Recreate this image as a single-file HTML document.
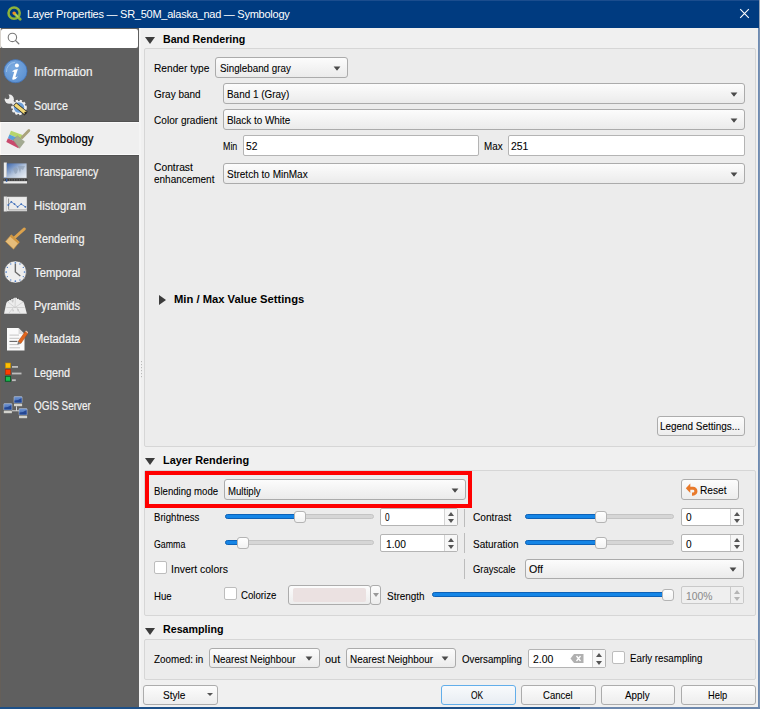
<!DOCTYPE html>
<html><head><meta charset="utf-8">
<style>
*{box-sizing:border-box;margin:0;padding:0}
html,body{width:760px;height:709px;overflow:hidden;background:#f0f0f0;font-family:"Liberation Sans",sans-serif;font-size:11px;color:#000}
.a{position:absolute}
.hdr{font-weight:bold;font-size:11px;white-space:nowrap;letter-spacing:-0.05px}
.grp{border:1px solid #d6d6d6;border-radius:2px;background:#ececec}
.l{white-space:nowrap;letter-spacing:-0.55px;-webkit-text-stroke:0.08px currentColor}
.cb{border:1px solid #ababab;border-radius:3px;background:linear-gradient(#fcfcfc,#ebebeb);white-space:nowrap;letter-spacing:-0.55px;overflow:hidden}
.cb span{position:absolute;left:4px;top:3px}
.arr{position:absolute;width:0;height:0;border-left:3.5px solid transparent;border-right:3.5px solid transparent;border-top:4px solid #474747}
.ed{border:1px solid #b4b4b4;border-radius:2px;background:#fff;white-space:nowrap;letter-spacing:-0.55px}
.ed span{position:absolute;left:4px;top:3px}
.btn{border:1px solid #acacac;border-radius:3px;background:linear-gradient(#fcfcfc,#ededed);white-space:nowrap;letter-spacing:-0.55px;text-align:center}
.chk{width:13px;height:13px;border:1px solid #bdbdbd;background:#fff;border-radius:2px}
.groove{height:5px;border-radius:3px;background:#d6d6d6;border:1px solid #c4c4c4}
.fill{height:5px;border-radius:3px;background:#1585e6;border:1px solid #0d62b8}
.hdl{width:12px;height:12px;border:1px solid #b4b4b4;border-radius:3px;background:linear-gradient(#fff,#f2f2f2)}
.spin{border:1px solid #b4b4b4;border-radius:2px;background:#fff;white-space:nowrap;letter-spacing:-0.55px}
.spin span{position:absolute;left:4px;top:2.5px}
.spin .sb{position:absolute;right:0;top:0;bottom:0;width:13px;border-left:1px solid #d4d4d4;background:#f7f7f7}
.up{position:absolute;left:2.5px;width:0;height:0;border-left:3.5px solid transparent;border-right:3.5px solid transparent;border-bottom:4px solid #555}
.dn{position:absolute;left:2.5px;width:0;height:0;border-left:3.5px solid transparent;border-right:3.5px solid transparent;border-top:4px solid #555}
.vsep{width:1px;background:#bcbcbc}
.side{white-space:nowrap;font-size:12px;letter-spacing:-0.15px;-webkit-text-stroke:0.2px currentColor}
</style></head><body>
<div class="a" style="left:0;top:0;width:760px;height:28px;background:#003b80"></div>
<div class="a" style="left:0;top:0;width:760px;height:1px;background:#1b4d8e"></div>
<svg class="a" style="left:6px;top:5px" width="18" height="18" viewBox="0 0 18 18">
<circle cx="8.1" cy="8.1" r="5.6" fill="none" stroke="#8db33a" stroke-width="2.5"/>
<path d="M8.4 8.4 L14.2 14.2" stroke="#8db33a" stroke-width="2.8" stroke-linecap="round"/>
<path d="M8.8 8.8 L12 12" stroke="#b3d36a" stroke-width="1.4" stroke-linecap="round"/>
<circle cx="8.1" cy="8.1" r="1.7" fill="#f39020"/></svg>
<div class="a" style="left:27px;top:8px;color:#fff;font-size:11px;letter-spacing:-0.25px;white-space:nowrap">Layer Properties — SR_50M_alaska_nad — Symbology</div>
<svg class="a" style="left:739px;top:8px" width="12" height="12" viewBox="0 0 12 12"><path d="M1.2 1.2L9.8 9.8M9.8 1.2L1.2 9.8" stroke="#fff" stroke-width="1.1"/></svg>
<div class="a" style="left:759px;top:0;width:1px;height:28px;background:#9aa6b8"></div>
<div class="a" style="left:758px;top:28px;width:1px;height:681px;background:#6d8bb3"></div>
<div class="a" style="left:759px;top:28px;width:1px;height:681px;background:#7d93b2"></div>
<div class="a" style="left:0;top:707px;width:580px;height:2px;background:#1d5088"></div>
<div class="a" style="left:580px;top:707px;width:180px;height:2px;background:#6d88ad"></div>
<svg class="a" style="left:145px;top:37px" width="10" height="7" viewBox="0 0 10 7"><path d="M0 0H10L5.0 7Z" fill="#3c3c3c"/></svg>
<div class="a grp" style="left:144px;top:48px;width:612px;height:399px"></div>
<div class="a cb" style="left:215px;top:57px;width:133px;height:21px;"><svg class="a" style="left:117px;top:7.8px" width="8" height="5" viewBox="0 0 8 5"><path d="M0.6 0.6 H7.4 L4.4 4.2 Q4 4.6 3.6 4.2 Z" fill="#4a4a4a"/></svg></div>
<div class="a cb" style="left:223px;top:83px;width:522px;height:21px;"><svg class="a" style="left:506px;top:7.8px" width="8" height="5" viewBox="0 0 8 5"><path d="M0.6 0.6 H7.4 L4.4 4.2 Q4 4.6 3.6 4.2 Z" fill="#4a4a4a"/></svg></div>
<div class="a cb" style="left:223px;top:109px;width:522px;height:21px;"><svg class="a" style="left:506px;top:7.8px" width="8" height="5" viewBox="0 0 8 5"><path d="M0.6 0.6 H7.4 L4.4 4.2 Q4 4.6 3.6 4.2 Z" fill="#4a4a4a"/></svg></div>
<div class="a ed" style="left:243px;top:135px;width:236px;height:21px;"></div>
<div class="a ed" style="left:508px;top:135px;width:237px;height:21px;"></div>
<div class="a cb" style="left:223px;top:163px;width:522px;height:21px;"><svg class="a" style="left:506px;top:7.8px" width="8" height="5" viewBox="0 0 8 5"><path d="M0.6 0.6 H7.4 L4.4 4.2 Q4 4.6 3.6 4.2 Z" fill="#4a4a4a"/></svg></div>
<svg class="a" style="left:158.6px;top:295px" width="7" height="10" viewBox="0 0 7 10"><path d="M0 0V10L7 5.0Z" fill="#3c3c3c"/></svg>
<div class="a btn" style="left:657px;top:416px;width:88px;height:20px;"></div>
<svg class="a" style="left:145px;top:458px" width="10" height="7" viewBox="0 0 10 7"><path d="M0 0H10L5.0 7Z" fill="#3c3c3c"/></svg>
<div class="a grp" style="left:144px;top:470px;width:612px;height:146px"></div>
<div class="a" style="left:145px;top:471px;width:327px;height:37px;border:4px solid #f00"></div>
<div class="a cb" style="left:224px;top:479px;width:242px;height:21px;"><svg class="a" style="left:226px;top:7.8px" width="8" height="5" viewBox="0 0 8 5"><path d="M0.6 0.6 H7.4 L4.4 4.2 Q4 4.6 3.6 4.2 Z" fill="#4a4a4a"/></svg></div>
<div class="a btn" style="left:681px;top:479px;width:58px;height:21px;"></div>
<svg class="a" style="left:685px;top:482px" width="14" height="14" viewBox="0 0 14 14"><path d="M4.5 6.3 H8 A2.9 2.9 0 0 1 8 12.1 H7" stroke="#e8792a" stroke-width="3.1" fill="none"/><path d="M0.8 6.3 L5.3 1.6 L5.3 11 Z" fill="#e8792a"/></svg>
<div class="a groove" style="left:225px;top:514px;width:149px"></div>
<div class="a fill" style="left:225px;top:514px;width:75px"></div>
<div class="a hdl" style="left:294px;top:510.5px"></div>
<div class="a spin" style="left:380px;top:508px;width:78px;height:18px;"><div class="sb"><div class="up" style="top:2.5px;"></div><div class="dn" style="top:9.5px;"></div></div></div>
<div class="a vsep" style="left:464px;top:509px;height:18px"></div>
<div class="a groove" style="left:525px;top:514px;width:149px"></div>
<div class="a fill" style="left:525px;top:514px;width:76px"></div>
<div class="a hdl" style="left:595px;top:510.5px"></div>
<div class="a spin" style="left:681px;top:508px;width:63px;height:18px;"><div class="sb"><div class="up" style="top:2.5px;"></div><div class="dn" style="top:9.5px;"></div></div></div>
<div class="a groove" style="left:225px;top:540px;width:149px"></div>
<div class="a fill" style="left:225px;top:540px;width:18px"></div>
<div class="a hdl" style="left:237px;top:536.5px"></div>
<div class="a spin" style="left:380px;top:534px;width:78px;height:18px;"><div class="sb"><div class="up" style="top:2.5px;"></div><div class="dn" style="top:9.5px;"></div></div></div>
<div class="a vsep" style="left:464px;top:533px;height:20px"></div>
<div class="a groove" style="left:525px;top:540px;width:149px"></div>
<div class="a fill" style="left:525px;top:540px;width:76px"></div>
<div class="a hdl" style="left:595px;top:536.5px"></div>
<div class="a spin" style="left:681px;top:534px;width:63px;height:18px;"><div class="sb"><div class="up" style="top:2.5px;"></div><div class="dn" style="top:9.5px;"></div></div></div>
<div class="a chk" style="left:154px;top:561px"></div>
<div class="a vsep" style="left:464px;top:559px;height:20px"></div>
<div class="a cb" style="left:525px;top:559px;width:219px;height:20px;"><svg class="a" style="left:203px;top:7.3px" width="8" height="5" viewBox="0 0 8 5"><path d="M0.6 0.6 H7.4 L4.4 4.2 Q4 4.6 3.6 4.2 Z" fill="#4a4a4a"/></svg></div>
<div class="a chk" style="left:224px;top:587px"></div>
<div class="a btn" style="left:288px;top:585px;width:83px;height:20px"><div class="a" style="left:4px;top:2px;width:73px;height:14px;background:#ebe1e1;border-radius:2px"></div></div>
<div class="a btn" style="left:370px;top:585px;width:11px;height:20px"><div class="arr" style="left:1.5px;top:7px;border-top-color:#999"></div></div>
<div class="a groove" style="left:432px;top:592px;width:242px"></div>
<div class="a fill" style="left:432px;top:592px;width:236px"></div>
<div class="a hdl" style="left:662px;top:588.5px"></div>
<div class="a spin" style="left:681px;top:586px;width:63px;height:18px;background:#efefef;border-color:#c9c9c9"><div class="sb" style="background:#efefef;border-left-color:#c9c9c9"><div class="up" style="top:2.5px;border-bottom-color:#b4b4b4"></div><div class="dn" style="top:9.5px;border-top-color:#b4b4b4"></div></div></div>
<svg class="a" style="left:145px;top:627.5px" width="10" height="7" viewBox="0 0 10 7"><path d="M0 0H10L5.0 7Z" fill="#3c3c3c"/></svg>
<div class="a grp" style="left:144px;top:639px;width:612px;height:41px"></div>
<div class="a cb" style="left:209px;top:648px;width:111px;height:20px;"><svg class="a" style="left:95px;top:7.3px" width="8" height="5" viewBox="0 0 8 5"><path d="M0.6 0.6 H7.4 L4.4 4.2 Q4 4.6 3.6 4.2 Z" fill="#4a4a4a"/></svg></div>
<div class="a cb" style="left:346px;top:648px;width:110px;height:20px;"><svg class="a" style="left:94px;top:7.3px" width="8" height="5" viewBox="0 0 8 5"><path d="M0.6 0.6 H7.4 L4.4 4.2 Q4 4.6 3.6 4.2 Z" fill="#4a4a4a"/></svg></div>
<div class="a spin" style="left:528px;top:649px;width:78px;height:19px;"><div class="sb"><div class="up" style="top:2.5px;"></div><div class="dn" style="top:10.5px;"></div></div></div>
<svg class="a" style="left:570px;top:653px" width="14" height="11" viewBox="0 0 14 11"><path d="M0.5 5.5 L4 1 H13.5 V10 H4 Z" fill="#b0b0b0"/><path d="M6.5 3 L10.5 8 M10.5 3 L6.5 8" stroke="#fff" stroke-width="1.3"/></svg>
<div class="a chk" style="left:612px;top:651px"></div>
<div class="a btn" style="left:143px;top:685px;width:75px;height:20px;"></div>
<div class="arr" style="left:207px;top:693px;border-left-width:3px;border-right-width:3px;border-top-width:3px;border-top-color:#555"></div>
<div class="a btn" style="left:441px;top:685px;width:75px;height:20px;border-color:#62aeea;background:linear-gradient(#f8fafc,#e8edf3)"></div>
<div class="a btn" style="left:521px;top:685px;width:75px;height:20px;"></div>
<div class="a btn" style="left:601px;top:685px;width:74px;height:20px;"></div>
<div class="a btn" style="left:681px;top:685px;width:75px;height:20px;"></div>
<div class="a l" style="left:153.75px;top:62.00px;transform:scaleX(0.9250);transform-origin:0 0;letter-spacing:0;">Render type</div>
<div class="a l" style="left:220.00px;top:62.00px;transform:scaleX(0.8906);transform-origin:0 0;letter-spacing:0;">Singleband gray</div>
<div class="a l" style="left:153.75px;top:88.00px;transform:scaleX(0.9069);transform-origin:0 0;letter-spacing:0;">Gray band</div>
<div class="a l" style="left:227.00px;top:88.00px;transform:scaleX(0.9022);transform-origin:0 0;letter-spacing:0;">Band 1 (Gray)</div>
<div class="a l" style="left:153.75px;top:114.25px;transform:scaleX(0.9167);transform-origin:0 0;letter-spacing:0;">Color gradient</div>
<div class="a l" style="left:227.00px;top:114.25px;transform:scaleX(0.9000);transform-origin:0 0;letter-spacing:0;">Black to White</div>
<div class="a l" style="left:222.50px;top:140.00px;transform:scaleX(0.8056);transform-origin:0 0;letter-spacing:0;">Min</div>
<div class="a l" style="left:246.25px;top:140.00px;transform:scaleX(0.9375);transform-origin:0 0;letter-spacing:0;">52</div>
<div class="a l" style="left:484.25px;top:140.00px;transform:scaleX(0.8929);transform-origin:0 0;letter-spacing:0;">Max</div>
<div class="a l" style="left:511.25px;top:140.00px;transform:scaleX(0.9444);transform-origin:0 0;letter-spacing:0;">251</div>
<div class="a l" style="left:153.75px;top:161.25px;transform:scaleX(0.9345);transform-origin:0 0;letter-spacing:0;">Contrast</div>
<div class="a l" style="left:153.75px;top:173.25px;transform:scaleX(0.9067);transform-origin:0 0;letter-spacing:0;">enhancement</div>
<div class="a l" style="left:227.00px;top:168.00px;transform:scaleX(0.9101);transform-origin:0 0;letter-spacing:0;">Stretch to MinMax</div>
<div class="a l" style="left:660.30px;top:420.40px;transform:scaleX(0.9011);transform-origin:0 0;letter-spacing:0;">Legend Settings...</div>
<div class="a l" style="left:153.75px;top:484.50px;transform:scaleX(0.8733);transform-origin:0 0;letter-spacing:0;">Blending mode</div>
<div class="a l" style="left:228.00px;top:484.50px;transform:scaleX(0.8750);transform-origin:0 0;letter-spacing:0;">Multiply</div>
<div class="a l" style="left:700.00px;top:483.75px;transform:scaleX(0.9224);transform-origin:0 0;letter-spacing:0;">Reset</div>
<div class="a l" style="left:153.75px;top:511.25px;transform:scaleX(0.8726);transform-origin:0 0;letter-spacing:0;">Brightness</div>
<div class="a l" style="left:385.00px;top:511.25px;transform:scaleX(0.7500);transform-origin:0 0;letter-spacing:0;">0</div>
<div class="a l" style="left:472.50px;top:511.25px;transform:scaleX(0.9226);transform-origin:0 0;letter-spacing:0;">Contrast</div>
<div class="a l" style="left:685.50px;top:511.25px;transform:scaleX(0.9167);transform-origin:0 0;letter-spacing:0;">0</div>
<div class="a l" style="left:153.75px;top:537.50px;transform:scaleX(0.8000);transform-origin:0 0;letter-spacing:0;">Gamma</div>
<div class="a l" style="left:385.50px;top:537.50px;transform:scaleX(0.9286);transform-origin:0 0;letter-spacing:0;">1.00</div>
<div class="a l" style="left:472.50px;top:537.50px;transform:scaleX(0.9100);transform-origin:0 0;letter-spacing:0;">Saturation</div>
<div class="a l" style="left:685.50px;top:537.50px;transform:scaleX(0.9167);transform-origin:0 0;letter-spacing:0;">0</div>
<div class="a l" style="left:171.25px;top:562.50px;transform:scaleX(0.9500);transform-origin:0 0;letter-spacing:0;">Invert colors</div>
<div class="a l" style="left:472.50px;top:563.00px;transform:scaleX(0.8600);transform-origin:0 0;letter-spacing:0;">Grayscale</div>
<div class="a l" style="left:529.25px;top:563.00px;transform:scaleX(0.9667);transform-origin:0 0;letter-spacing:0;">Off</div>
<div class="a l" style="left:153.75px;top:589.50px;transform:scaleX(0.8750);transform-origin:0 0;letter-spacing:0;">Hue</div>
<div class="a l" style="left:241.25px;top:588.75px;transform:scaleX(0.8750);transform-origin:0 0;letter-spacing:0;">Colorize</div>
<div class="a l" style="left:387.00px;top:589.50px;transform:scaleX(0.9048);transform-origin:0 0;letter-spacing:0;">Strength</div>
<div class="a l" style="left:153.75px;top:652.50px;transform:scaleX(0.8955);transform-origin:0 0;letter-spacing:0;">Zoomed: in</div>
<div class="a l" style="left:213.25px;top:652.50px;transform:scaleX(0.8925);transform-origin:0 0;letter-spacing:0;">Nearest Neighbour</div>
<div class="a l" style="left:325.00px;top:653.00px;transform:scaleX(1.0000);transform-origin:0 0;letter-spacing:0;">out</div>
<div class="a l" style="left:350.00px;top:652.50px;transform:scaleX(0.9005);transform-origin:0 0;letter-spacing:0;">Nearest Neighbour</div>
<div class="a l" style="left:462.00px;top:652.50px;transform:scaleX(0.8824);transform-origin:0 0;letter-spacing:0;">Oversampling</div>
<div class="a l" style="left:533.00px;top:652.50px;transform:scaleX(0.9524);transform-origin:0 0;letter-spacing:0;">2.00</div>
<div class="a l" style="left:629.50px;top:651.75px;transform:scaleX(0.8841);transform-origin:0 0;letter-spacing:0;">Early resampling</div>
<div class="a l" style="left:163.00px;top:688.75px;transform:scaleX(0.9167);transform-origin:0 0;letter-spacing:0;">Style</div>
<div class="a l" style="left:471.25px;top:688.75px;transform:scaleX(0.7647);transform-origin:0 0;letter-spacing:0;">OK</div>
<div class="a l" style="left:543.00px;top:688.75px;transform:scaleX(0.8676);transform-origin:0 0;letter-spacing:0;">Cancel</div>
<div class="a l" style="left:625.00px;top:688.75px;transform:scaleX(0.8929);transform-origin:0 0;letter-spacing:0;">Apply</div>
<div class="a l" style="left:707.50px;top:688.75px;transform:scaleX(0.8478);transform-origin:0 0;letter-spacing:0;">Help</div>
<div class="a hdr" style="left:162.70px;top:32.70px;transform:scaleX(0.9682);transform-origin:0 0;letter-spacing:0;">Band Rendering</div>
<div class="a hdr" style="left:173.70px;top:292.80px;transform:scaleX(1.0195);transform-origin:0 0;letter-spacing:0;">Min / Max Value Settings</div>
<div class="a hdr" style="left:162.50px;top:453.75px;transform:scaleX(0.9914);transform-origin:0 0;letter-spacing:0;">Layer Rendering</div>
<div class="a hdr" style="left:163.00px;top:623.00px;transform:scaleX(0.9718);transform-origin:0 0;letter-spacing:0;">Resampling</div>
<div class="a l" style="left:686.25px;top:589.50px;transform:scaleX(0.9375);transform-origin:0 0;letter-spacing:0;color:#8c8c8c;">100%</div>
<div class="a" style="left:0;top:28px;width:139px;height:679px;background:#5f5f5f"></div>
<div class="a" style="left:1px;top:29px;width:137px;height:19px;background:#fff;border-radius:2px"></div>
<svg class="a" style="left:6px;top:31px" width="16" height="16" viewBox="0 0 16 16"><circle cx="6.4" cy="6.4" r="4.2" fill="none" stroke="#7a7a7a" stroke-width="1.1"/><path d="M9.4 9.4 L12.8 12.8" stroke="#7a7a7a" stroke-width="1.3" stroke-linecap="round"/></svg>
<div class="a" style="left:0;top:121px;width:139px;height:35px;background:#525252"></div>
<div class="a" style="left:0;top:122px;width:139px;height:33px;background:#efefef;border-top:1px solid #fafafa;border-bottom:1px solid #fafafa"></div>
<div class="a" style="left:0;top:48px;width:1px;height:659px;background:#655f59"></div>
<div class="a" style="left:0;top:28px;width:1px;height:20px;background:#d9d4ce"></div>
<div class="a" style="left:0;top:122px;width:1px;height:33px;background:#fcf8f5"></div>
<div class="a" style="left:139px;top:28px;width:2px;height:679px;background:#f4f4f4"></div>
<svg class="a" style="left:140px;top:360px" width="3" height="18" viewBox="0 0 3 18"><g fill="#b9b9b9"><rect x="1" y="1" width="1" height="1.2"/><rect x="1" y="4" width="1" height="1.2"/><rect x="1" y="7" width="1" height="1.2"/><rect x="1" y="10" width="1" height="1.2"/><rect x="1" y="13" width="1" height="1.2"/><rect x="1" y="16" width="1" height="1.2"/></g></svg>
<svg class="a" style="left:3px;top:59px" width="25" height="25" viewBox="0 0 25 25"><defs><radialGradient id="gi" cx="0.4" cy="0.35" r="0.75"><stop offset="0" stop-color="#7aaae0"/><stop offset="1" stop-color="#5a8fd0"/></radialGradient></defs><circle cx="12.5" cy="12.2" r="11.6" fill="url(#gi)" stroke="#3d6db0" stroke-width="0.7"/><path d="M3.5 13 A9 9 0 0 1 12 3.3" stroke="#a8c8ee" stroke-width="1" fill="none" opacity="0.8"/><circle cx="13.9" cy="6.4" r="2" fill="#fff"/><path d="M8.8 12.6 Q11 10.4 14.9 10 L12.5 17.6 Q12.3 18.7 13.6 18 L15 17.3 Q13.2 20.6 10.3 20.7 Q8.9 20.7 9.3 19.2 L11.2 13 Q10.6 12.5 8.8 12.6 Z" fill="#fff"/></svg>
<div class="a side" style="left:33.80px;top:65.2px;color:#f2f2f2;letter-spacing:0;transform:scaleX(0.9767);transform-origin:0 0">Information</div>
<svg class="a" style="left:3px;top:91.5px" width="25" height="25" viewBox="0 0 25 25"><circle cx="16" cy="15.5" r="6.6" fill="#f0f0f0" stroke="#f0f0f0" stroke-width="2.4" stroke-dasharray="2.2 1.75"/><circle cx="16" cy="15.5" r="5.2" fill="#6d9fd8"/><path d="M6.5 7.5 L13 13.5" stroke="#e2e2e2" stroke-width="3.2" stroke-linecap="round"/><circle cx="6.3" cy="7.2" r="4.6" fill="#ececec"/><circle cx="4.2" cy="5.0" r="2.3" fill="#5f5f5f"/><path d="M1 3.5 L4 6 L6 3 L3 0 Z" fill="#5f5f5f"/><path d="M11.6 12 L23.2 21.6" stroke="#2a2a2a" stroke-width="4.8" stroke-linecap="butt"/><path d="M12.1 12.4 L22.6 21.1" stroke="#f2d873" stroke-width="3.3" stroke-linecap="butt"/><circle cx="22.4" cy="20.9" r="1.1" fill="#222"/></svg>
<div class="a side" style="left:33.80px;top:98.6px;color:#f2f2f2;letter-spacing:0;transform:scaleX(0.8921);transform-origin:0 0">Source</div>
<svg class="a" style="left:6px;top:125.5px" width="25" height="25" viewBox="0 0 25 25"><path d="M5 4.7 L16.6 8.9 L15.2 13.4 L3.4 8.5 Z" fill="#b6d56c"/><path d="M3.4 8.5 L15.2 13.4 L13.8 17.8 L1.9 12.2 Z" fill="#5aa0dc"/><path d="M1.9 12.2 L13.8 17.8 L12.4 22.3 L0.3 16 Z" fill="#c84a6c"/><path d="M16.1 11.4 L22.9 4.4" stroke="#aaa37c" stroke-width="2.8" stroke-linecap="round"/><path d="M7.2 13.9 L11.4 9.9 L18.5 15.7 L13.5 22.3 Z" fill="#a3aa92" stroke="#8f9578" stroke-width="0.5"/></svg>
<div class="a side" style="left:36.80px;top:132.0px;color:#000;letter-spacing:0;transform:scaleX(0.9525);transform-origin:0 0">Symbology</div>
<svg class="a" style="left:3px;top:161px" width="25" height="25" viewBox="0 0 25 25"><defs><linearGradient id="gt" x1="0" y1="0" x2="1" y2="1"><stop offset="0" stop-color="#3b66ad"/><stop offset="0.55" stop-color="#b9c8dd"/><stop offset="1" stop-color="#eef2f7"/></linearGradient></defs><rect x="0.8" y="1.5" width="3" height="15" fill="#ececec"/><rect x="3.8" y="2.4" width="19.8" height="14.5" fill="url(#gt)"/><path d="M10 8 L13 6 L15 8 L14 12 L12 13 Z M15 5 L22 5 L20 9 L18 8 L17 12 L16 9 Z M6 9 L8 10 L7 13 Z" fill="#8f9fb6" opacity="0.7"/><rect x="0.8" y="16" width="3" height="1" fill="#9fb3d4"/><rect x="0.5" y="18" width="24" height="1.8" fill="#3c3c3c"/><path d="M1.5 18 V19.8 M4 18 V19.8 M6.5 18 V19.8 M9 18 V19.8 M11.5 18 V19.8 M14 18 V19.8 M16.5 18 V19.8 M19 18 V19.8 M21.5 18 V19.8" stroke="#777" stroke-width="0.6"/><rect x="0.5" y="20.2" width="23.5" height="2.3" fill="#eaeaea"/><rect x="2.9" y="17.8" width="1.4" height="3" fill="#2d5aa6"/></svg>
<div class="a side" style="left:33.80px;top:165.4px;color:#f2f2f2;letter-spacing:0;transform:scaleX(0.8808);transform-origin:0 0">Transparency</div>
<svg class="a" style="left:3px;top:194.5px" width="25" height="25" viewBox="0 0 25 25"><rect x="0.8" y="1.5" width="3" height="15" fill="#e6e6e6"/><rect x="3.8" y="2" width="20" height="14" fill="#ececec" stroke="#d8d8d8" stroke-width="0.5"/><path d="M5.6 3.5 V14.5 H23.5" stroke="#777" stroke-width="0.8" fill="none"/><rect x="5.6" y="14.2" width="18" height="1.8" fill="#cfcfcf"/><path d="M5.3 10 L8.3 6.8 L11.5 9.1 L14.6 11.8 L18.2 9.1 L22.3 11.8" stroke="#4a78c0" stroke-width="0.8" fill="none"/><g fill="#3d6cb8"><circle cx="5.3" cy="10" r="0.9"/><circle cx="8.3" cy="6.8" r="0.9"/><circle cx="11.5" cy="9.1" r="0.9"/><circle cx="14.6" cy="11.8" r="0.9"/><circle cx="18.2" cy="9.1" r="0.9"/><circle cx="22.3" cy="11.8" r="0.9"/></g></svg>
<div class="a side" style="left:33.80px;top:198.8px;color:#f2f2f2;letter-spacing:0;transform:scaleX(0.9491);transform-origin:0 0">Histogram</div>
<svg class="a" style="left:3px;top:225px" width="25" height="25" viewBox="0 0 25 25"><path d="M21.4 3.9 L11.8 12.5" stroke="#dca24c" stroke-width="2.8" stroke-linecap="round"/><path d="M2.4 16.5 L8.3 9.8 L16.4 17 L10.6 24.2 Z" fill="#e6bd7a" stroke="#c08a3a" stroke-width="0.6"/><path d="M8.3 9.8 L16.4 17 L15 18.6 L6.9 11.4 Z" fill="#d09640"/></svg>
<div class="a side" style="left:33.80px;top:232.2px;color:#f2f2f2;letter-spacing:0;transform:scaleX(0.9127);transform-origin:0 0">Rendering</div>
<svg class="a" style="left:3px;top:260px" width="25" height="25" viewBox="0 0 25 25"><circle cx="12.35" cy="12.0" r="11.1" fill="#eeeeee" stroke="#505050" stroke-width="0.6"/><g fill="#4f7fc8"><circle cx="12.35" cy="2.80" r="0.85"/><circle cx="16.95" cy="4.03" r="0.7"/><circle cx="20.32" cy="7.40" r="0.7"/><circle cx="21.55" cy="12.00" r="0.85"/><circle cx="20.32" cy="16.60" r="0.7"/><circle cx="16.95" cy="19.97" r="0.7"/><circle cx="12.35" cy="21.20" r="0.85"/><circle cx="7.75" cy="19.97" r="0.7"/><circle cx="4.38" cy="16.60" r="0.7"/><circle cx="3.15" cy="12.00" r="0.85"/><circle cx="4.38" cy="7.40" r="0.7"/><circle cx="7.75" cy="4.03" r="0.7"/></g><path d="M12.35 3.8 V12.0 L17.3 16" stroke="#6a6a6a" stroke-width="1.4" fill="none"/></svg>
<div class="a side" style="left:33.80px;top:265.6px;color:#f2f2f2;letter-spacing:0;transform:scaleX(0.9388);transform-origin:0 0">Temporal</div>
<svg class="a" style="left:3px;top:295px" width="25" height="25" viewBox="0 0 25 25"><path d="M1 18.7 L3.3 8 L4.6 6 L12.4 2.3 L19.9 6 L21 8 L23.9 18.7 Z" fill="#ededed"/><path d="M4.6 6 L12.4 2.3 L19.9 6" stroke="#2e2e2e" stroke-width="0.8" stroke-dasharray="1.2 1.4" fill="none"/><path d="M5 7 L12 12.5 L20 7 M12.4 3 L12 12.5 M3.5 12.5 H21.5 M6 18 L10 13 M17 18 L14 13" stroke="#c2c2c2" stroke-width="0.6" fill="none"/><path d="M9 14 L11 15 L10 17 Z M14 14 L16 14.5 L15 17 Z M8 5.5 L11 4.5 L10 8 Z" fill="#b8b8b8" opacity="0.7"/></svg>
<div class="a side" style="left:33.80px;top:299.0px;color:#f2f2f2;letter-spacing:0;transform:scaleX(0.9200);transform-origin:0 0">Pyramids</div>
<svg class="a" style="left:3px;top:326px" width="25" height="25" viewBox="0 0 25 25"><path d="M4 2 L15.5 2 L21.5 8 L21.5 24.5 L4 24.5 Z" fill="#fafafa"/><path d="M15.5 2 L15.5 8 L21.5 8 Z" fill="#dcdcdc"/><path d="M6.5 9.1 H16 M6.5 12.3 H16.5 M6.5 15.4 H16.5 M6.5 18.6 H16.5 M6.5 21.8 H17" stroke="#bdbdbd" stroke-width="0.9"/><path d="M6.5 15.4 H14" stroke="#555" stroke-width="0.9"/><path d="M15.2 15.6 L22.2 5.6 L24.8 7.5 L17.8 17.5 Z" fill="#e2661e" stroke="#a84810" stroke-width="0.5"/><path d="M22.2 5.6 L23 4.5 L25.6 6.4 L24.8 7.5 Z" fill="#f0c0a0"/><path d="M15.2 15.6 L17.8 17.5 L14.2 18.6 Z" fill="#777"/></svg>
<div class="a side" style="left:33.80px;top:332.4px;color:#f2f2f2;letter-spacing:0;transform:scaleX(0.9300);transform-origin:0 0">Metadata</div>
<svg class="a" style="left:3px;top:358.5px" width="25" height="25" viewBox="0 0 25 25"><rect x="2.4" y="4" width="5.2" height="5" fill="#ffc000" stroke="#c08a00" stroke-width="0.6"/><rect x="2.4" y="10.6" width="5.2" height="5" fill="#ff3d00" stroke="#b02a00" stroke-width="0.6"/><rect x="2.4" y="17.3" width="5.2" height="5" fill="#16c050" stroke="#0a5a26" stroke-width="1" stroke-width="0.6"/><rect x="9" y="7" width="6" height="1.8" fill="#bdbdbd"/><rect x="9" y="13.6" width="9.5" height="1.8" fill="#bdbdbd"/><rect x="9" y="20.3" width="3.8" height="1.8" fill="#bdbdbd"/></svg>
<div class="a side" style="left:33.80px;top:365.8px;color:#f2f2f2;letter-spacing:0;transform:scaleX(0.9025);transform-origin:0 0">Legend</div>
<svg class="a" style="left:3px;top:393.5px" width="25" height="25" viewBox="0 0 25 25"><defs><linearGradient id="gs" x1="0" y1="0" x2="0" y2="1"><stop offset="0" stop-color="#7196d2"/><stop offset="1" stop-color="#3a64b0"/></linearGradient></defs><path d="M13.5 12.3 V16.8 M9 16.8 H16" stroke="#d8d8d8" stroke-width="1"/><rect x="11" y="2.6" width="8.1" height="6.4" rx="0.6" fill="url(#gs)" stroke="#c9cdd2" stroke-width="0.5"/><path d="M11.5 6.6 Q15 6.6 18.6 4.1 V8.6 H11.5 Z" fill="#1e3f8c" opacity="0.85"/><rect x="11" y="9.8" width="8.1" height="2.4" fill="#d2d2cc"/><rect x="0.8" y="9.6" width="8.1" height="6.4" rx="0.6" fill="url(#gs)" stroke="#c9cdd2" stroke-width="0.5"/><path d="M1.3 13.6 Q4.8 13.6 8.4 11.1 V15.6 H1.3 Z" fill="#1e3f8c" opacity="0.85"/><rect x="0.8" y="16.8" width="8.1" height="2.4" fill="#d2d2cc"/><rect x="16" y="14.6" width="8.1" height="6.4" rx="0.6" fill="url(#gs)" stroke="#c9cdd2" stroke-width="0.5"/><path d="M16.5 18.6 Q20 18.6 23.6 16.1 V20.6 H16.5 Z" fill="#1e3f8c" opacity="0.85"/><rect x="16" y="21.8" width="8.1" height="2.4" fill="#d2d2cc"/></svg>
<div class="a side" style="left:33.80px;top:399.2px;color:#f2f2f2;letter-spacing:0;transform:scaleX(0.8261);transform-origin:0 0">QGIS Server</div>
</body></html>
